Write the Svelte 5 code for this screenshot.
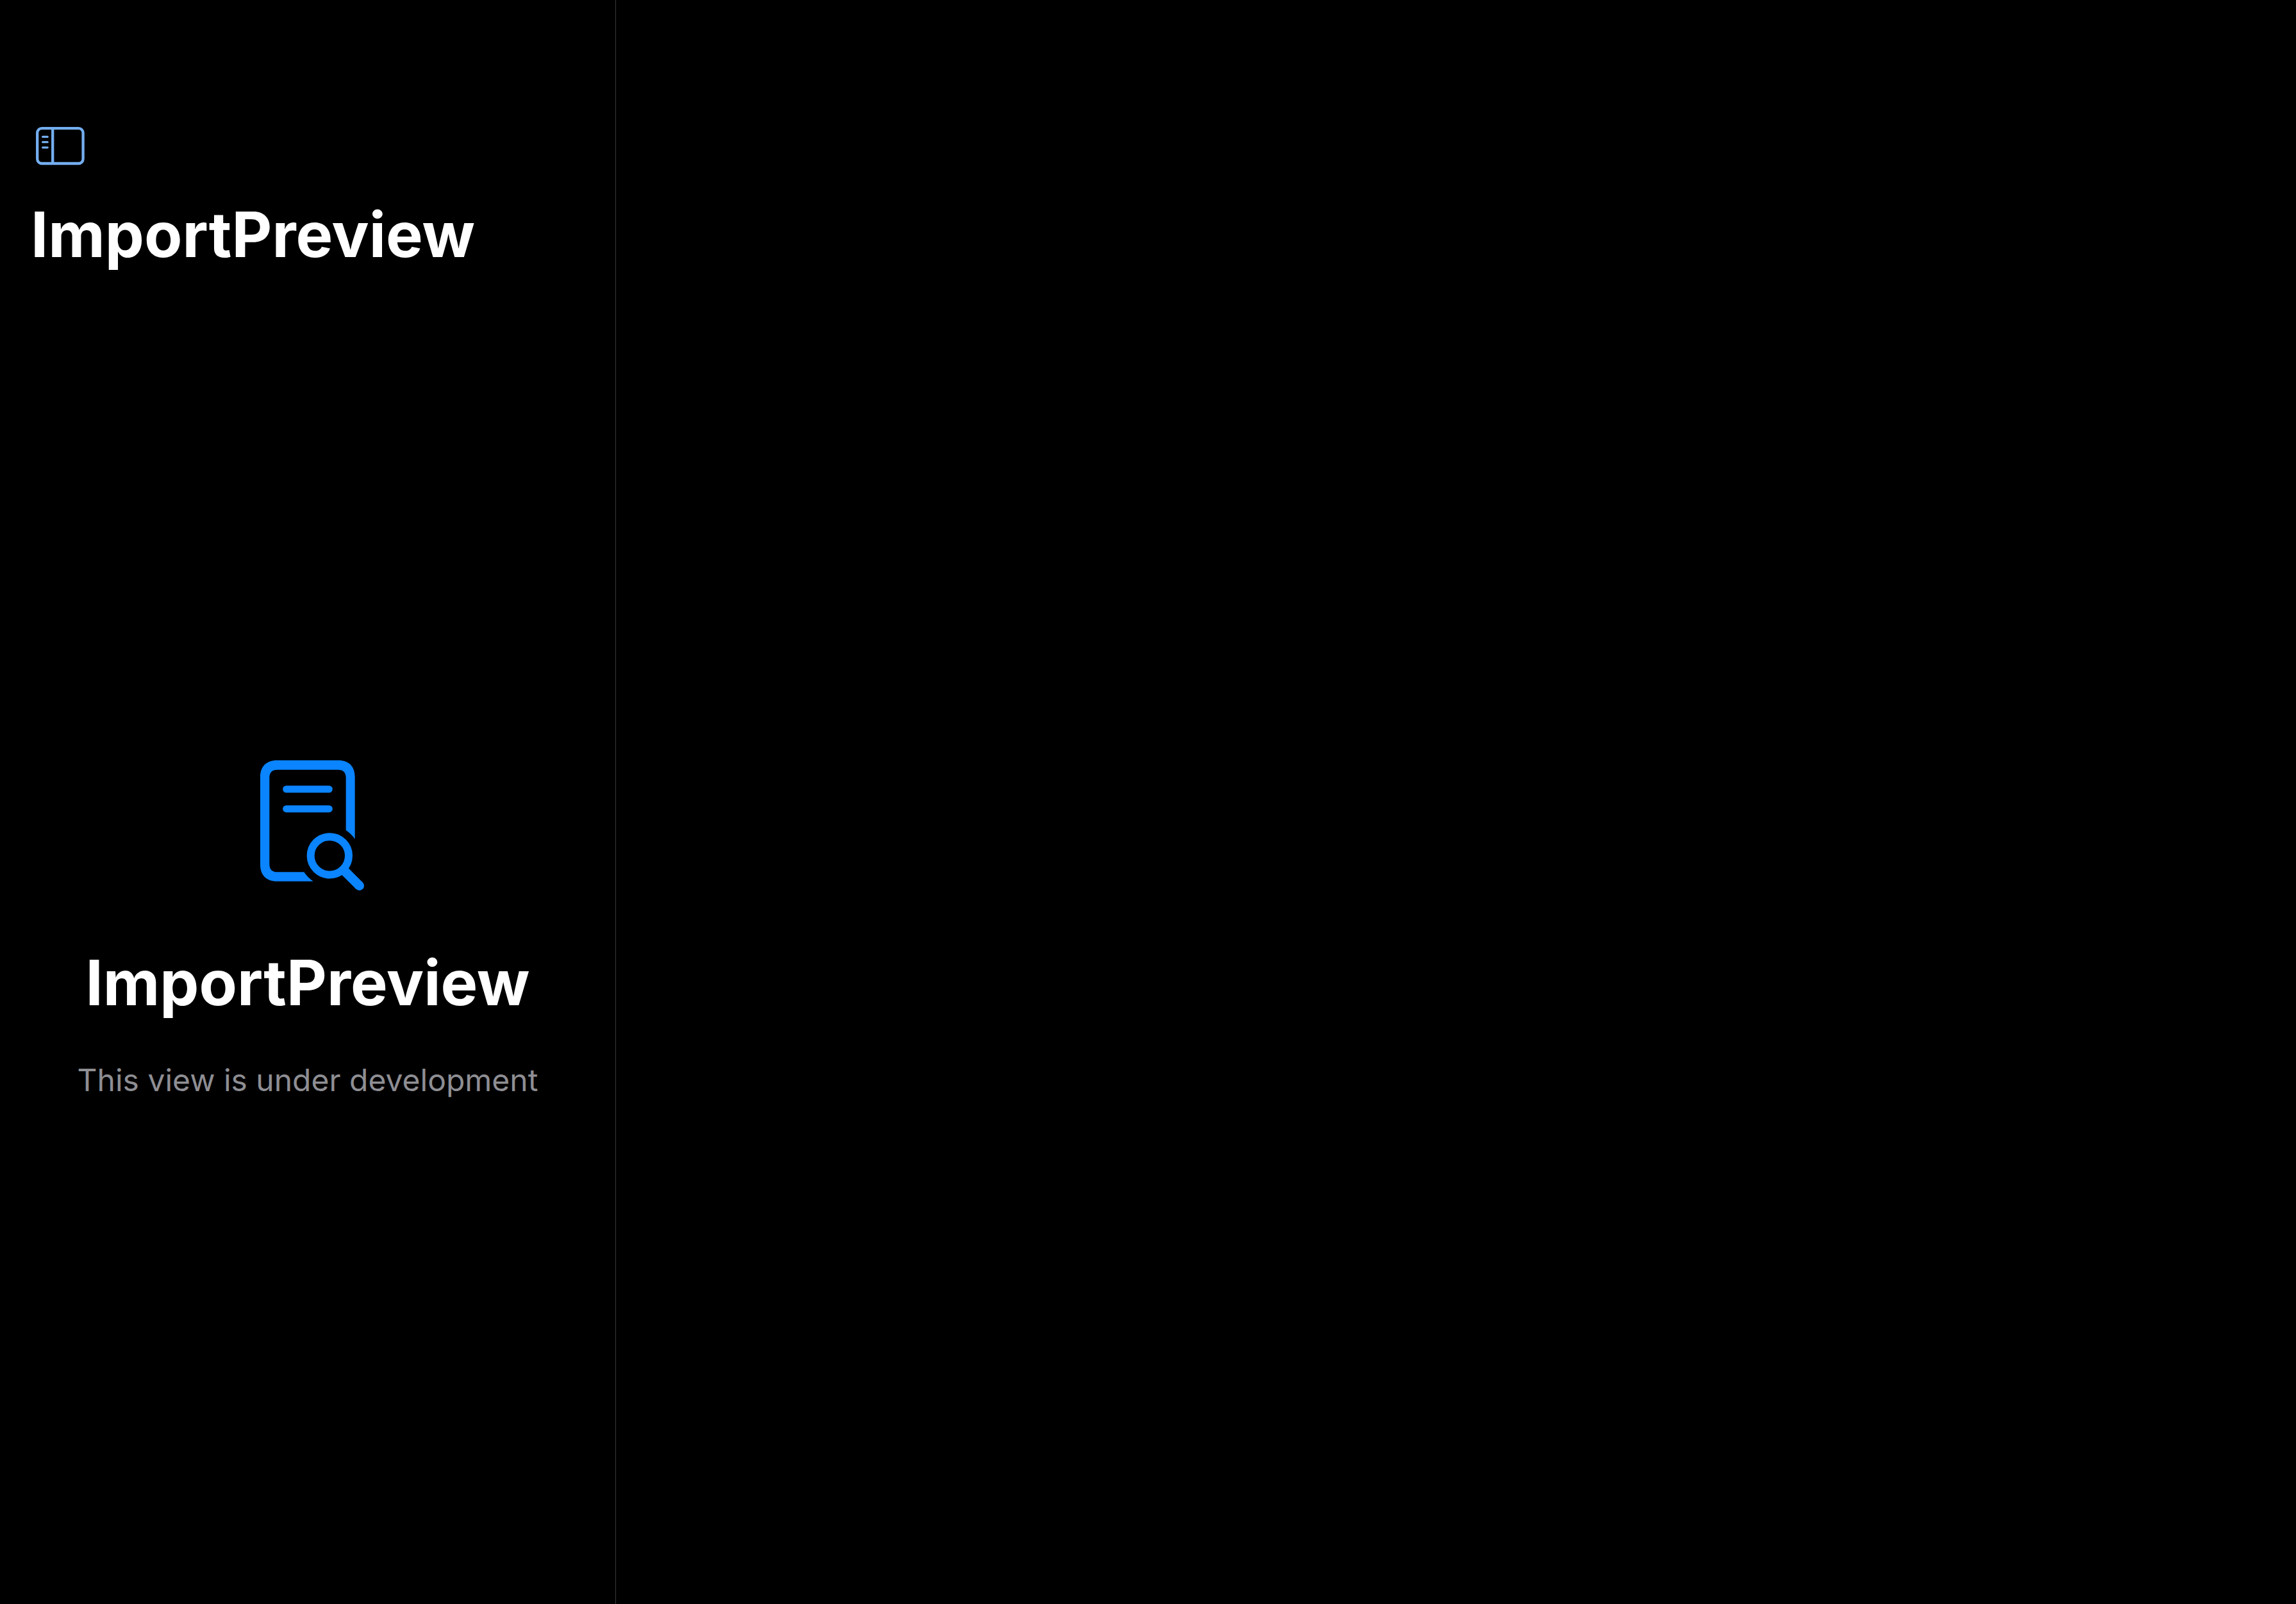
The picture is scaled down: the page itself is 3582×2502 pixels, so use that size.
<script>
  const title = 'ImportPreview';
  const message = 'This view is under development';
  let open = $state(true);
</script>

<div class="split">
  <aside class="sidebar">
    <header class="bar">
      <button class="toggle" type="button" aria-label="Toggle sidebar" aria-expanded={open} onclick={() => (open = !open)}>
        <svg viewBox="0 0 76 60" width="76" height="60" fill="none" stroke="currentColor" aria-hidden="true">
          <rect x="2.2" y="2.2" width="71.4" height="54.8" rx="7" stroke-width="4.3" />
          <path d="M26.2 2v55" stroke-width="4.3" />
          <path d="M10.6 15.4h7.6M10.6 23.7h7.6M10.6 32.1h7.6" stroke-width="3.2" stroke-linecap="round" />
        </svg>
      </button>
      <h1>{title}</h1>
    </header>
    <section class="placeholder">
      <svg class="doc" viewBox="36 51 528 609" width="176" height="203" fill="none" stroke="currentColor" aria-hidden="true">
        <path
          fill="currentColor"
          stroke="none"
          d="M156 51H444C493 51 521 80 521 129V419Q504 395 479 378V133C479 108 467 95 442 95H158C133 95 121 108 121 133V536C121 561 133 574 158 574H283Q300 600 326 617H156C107 617 78 588 78 539V129C78 80 107 51 156 51Z"
        />
        <path d="M200 186H400M200 278H400" stroke-width="33" stroke-linecap="round" />
        <circle cx="403" cy="497.500" r="89" stroke-width="36" />
        <path d="M474 570L542 638" stroke-width="44" stroke-linecap="butt" />
        <circle cx="542" cy="638" r="22" fill="currentColor" stroke="none" />
      </svg>
      <h2>{title}</h2>
      <p>{message}</p>
    </section>
  </aside>
  <main class="detail"></main>
</div>

<style>
  :global(body) {
    background: #000;
  }
  .split {
    display: flex;
    min-height: 100vh;
    background: #000;
    color: #fff;
    font-family: Inter, 'Liberation Sans', sans-serif;
  }
  .sidebar {
    box-sizing: border-box;
    flex: 0 0 961px;
    display: flex;
    flex-direction: column;
    border-right: 1px solid #38383a;
  }
  .detail {
    flex: 1;
  }
  .bar {
    padding: 198px 48px 12px;
  }
  .toggle {
    display: block;
    margin: 0 0 48px 8px;
    padding: 0;
    border: 0;
    background: none;
    color: #74aef0;
    cursor: pointer;
  }
  svg {
    display: block;
  }
  h1,
  h2 {
    margin: 0;
    font-size: 97px;
    line-height: 120px;
    font-weight: 700;
  }
  .placeholder {
    flex: 1;
    display: flex;
    flex-direction: column;
    align-items: center;
    justify-content: center;
    padding-bottom: 40px;
    text-align: center;
  }
  .doc {
    color: #0a84ff;
  }
  h2 {
    margin-top: 84px;
  }
  p {
    margin: 62px 0 0;
    color: #8e8e93;
    font-size: 48px;
    line-height: 60px;
  }
</style>
